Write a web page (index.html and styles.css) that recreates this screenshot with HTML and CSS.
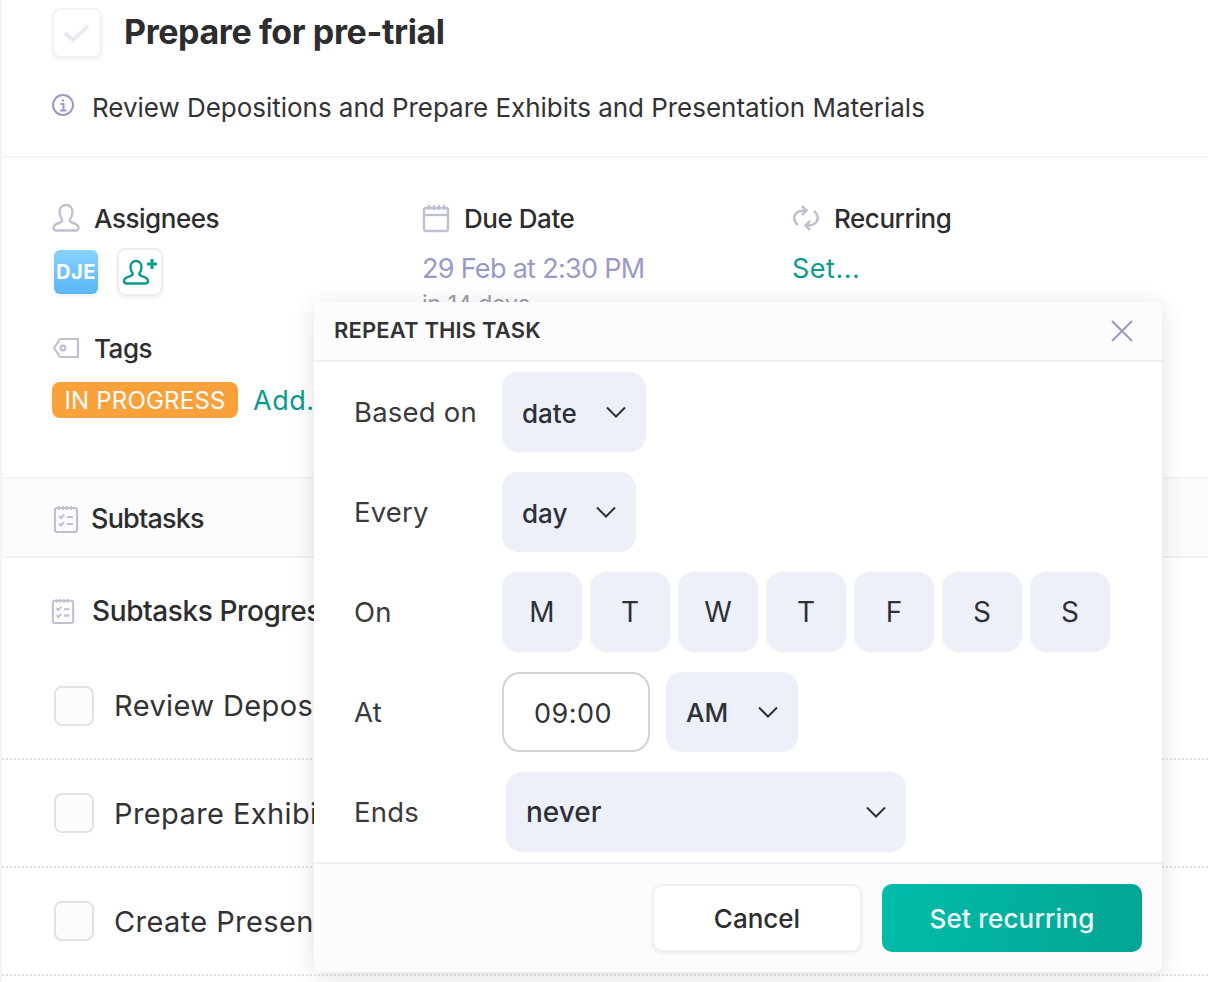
FILE: index.html
```html
<!DOCTYPE html>
<html lang="en">
<head>
<meta charset="utf-8">
<title>Prepare for pre-trial</title>
<link rel="stylesheet" href="styles.css">
</head>
<body>
<main class="page">
  <section class="head">
    <div class="title-row">
      <span class="big-check"><svg width="28" height="22" viewBox="0 0 28 22" fill="none"><path d="M2 11l8 7L25 4" stroke="#e9eaf1" stroke-width="4"/></svg></span>
      <h1>Prepare for pre-trial</h1>
    </div>
    <div class="desc-row">
      <svg class="info" width="24" height="24" viewBox="0 0 24 24" fill="none" stroke="#9a9ac6" stroke-width="2"><circle cx="12" cy="12" r="10"/><path d="M9.5 11h3v6M9 17.5h6.500"/><circle cx="12" cy="7.500" r="1.200" fill="#9a9ac6" stroke="none"/></svg>
      <p>Review Depositions and Prepare Exhibits and Presentation Materials</p>
    </div>
  </section>

  <section class="fields">
    <div class="field">
      <div class="field-head">
        <svg width="28" height="30" viewBox="0 0 28 30" fill="none" stroke="#bfc1d2" stroke-width="2.400"><path d="M14 2c-4 0-6.500 3-6.500 7 0 3 1 5.500 2.500 7.500 1 1.500-.5 2.500-3 3.500C3.500 21 1.500 22.500 1.500 25c0 1.500 1 2.500 3 2.500h19c2 0 3-1 3-2.500 0-2.500-2-4-5.500-5-2.500-1-4-2-3-3.500 1.500-2 2.500-4.500 2.500-7.500 0-4-2.500-7-6.500-7z"/></svg>
        <span>Assignees</span>
      </div>
      <div class="assignees">
        <span class="avatar">DJE</span>
        <span class="add-user"><svg width="38" height="32" viewBox="0 0 38 32" fill="none" stroke="#0a9b8c" stroke-width="2.400"><path d="M15 5c-3.500 0-5.500 2.500-5.500 6 0 2.500.8 4.500 2 6 1 1.500-.5 2.500-3 3.300-3.500 1-5.500 2.200-5.500 4.700 0 1.500 1 2.500 3 2.500h18c2 0 3-1 3-2.500 0-2.500-2-3.700-5.500-4.700-2.500-.8-4-1.800-3-3.300 1.200-1.500 2-3.500 2-6 0-3.500-2-6-5.500-6z"/><path d="M31 3v10M26 8h10" stroke-width="3"/></svg></span>
      </div>
    </div>
    <div class="field">
      <div class="field-head">
        <svg width="28" height="30" viewBox="0 0 28 30" fill="none" stroke="#bfc1d2" stroke-width="2.400"><rect x="2" y="5" width="24" height="23" rx="2"/><path d="M2 12h24"/><path d="M7 2v5M12 2v5M17 2v5M22 2v5" stroke-width="2"/></svg>
        <span>Due Date</span>
      </div>
      <div class="due">29 Feb at 2:30 PM</div>
      <div class="due-sub">in 14 days</div>
    </div>
    <div class="field">
      <div class="field-head">
        <svg width="28" height="30" viewBox="0 0 28 30" fill="none" stroke="#bfc1d2" stroke-width="2.600"><path d="M6 22C2 19 1 14 4 10.500 6 8 9 7.500 13 7.500"/><path d="M10 3l4.500 4.500L10 12"/><path d="M22 8c4 3 5 8 2 11.500-2 2.500-5 3-9 3"/><path d="M18 18l-4.500 4.500L18 27"/></svg>
        <span>Recurring</span>
      </div>
      <a class="link set">Set...</a>
    </div>
    <div class="field tags">
      <div class="field-head">
        <svg width="28" height="22" viewBox="0 0 28 22" fill="none" stroke="#bfc1d2" stroke-width="2.200"><path d="M8 2h18v18H8L2 11z" stroke-linejoin="round"/><circle cx="11" cy="11" r="2.400"/></svg>
        <span>Tags</span>
      </div>
      <div class="tag-row"><span class="tag">IN PROGRESS</span><a class="link">Add...</a></div>
    </div>
  </section>

  <section class="sub-bar">
    <svg width="26" height="28" viewBox="0 0 26 28" fill="none" stroke="#bfc1d2" stroke-width="2.200"><rect x="2" y="3" width="22" height="24" rx="2"/><path d="M6 1v4M10 1v4M14 1v4M18 1v4" stroke-width="1.600"/><path d="M6 11l2 2 3-3.500M6 18.500l2 2 3-3.500M14 12h6M14 19h6"/></svg>
    <span>Subtasks</span>
  </section>

  <section class="progress">
    <div class="progress-head">
      <svg width="24" height="26" viewBox="0 0 26 28" fill="none" stroke="#bfc1d2" stroke-width="2.200"><rect x="2" y="3" width="22" height="24" rx="2"/><path d="M6 1v4M10 1v4M14 1v4M18 1v4" stroke-width="1.600"/><path d="M6 11l2 2 3-3.500M6 18.500l2 2 3-3.500M14 12h6M14 19h6"/></svg>
      <span>Subtasks Progress</span>
    </div>
    <div class="task first"><span class="box"></span><span>Review Depositions</span></div>
    <div class="task"><span class="box"></span><span>Prepare Exhibits</span></div>
    <div class="task"><span class="box"></span><span>Create Presentation Materials</span></div>
  </section>
</main>

<aside class="modal">
  <header class="modal-head">
    <h2>REPEAT THIS TASK</h2>
    <svg width="24" height="24" viewBox="0 0 24 24" fill="none" stroke="#9a9ac6" stroke-width="2"><path d="M2 2l20 20M22 2L2 22"/></svg>
  </header>
  <div class="modal-body">
    <div class="row">
      <label>Based on</label>
      <div class="select w-date"><span>date</span><svg class="chev" width="20" height="12" viewBox="0 0 20 12" fill="none" stroke="#2d3038" stroke-width="2"><path d="M1 1.500l9 9 9-9"/></svg></div>
    </div>
    <div class="row">
      <label>Every</label>
      <div class="select w-day"><span>day</span><svg class="chev" width="20" height="12" viewBox="0 0 20 12" fill="none" stroke="#2d3038" stroke-width="2"><path d="M1 1.500l9 9 9-9"/></svg></div>
    </div>
    <div class="row">
      <label>On</label>
      <div class="days"><span>M</span><span>T</span><span>W</span><span>T</span><span>F</span><span>S</span><span>S</span></div>
    </div>
    <div class="row">
      <label>At</label>
      <div class="time">09:00</div>
      <div class="select w-am"><span>AM</span><svg class="chev" width="20" height="12" viewBox="0 0 20 12" fill="none" stroke="#2d3038" stroke-width="2"><path d="M1 1.500l9 9 9-9"/></svg></div>
    </div>
    <div class="row">
      <label>Ends</label>
      <div class="select w-ends"><span>never</span><svg class="chev" width="20" height="12" viewBox="0 0 20 12" fill="none" stroke="#2d3038" stroke-width="2"><path d="M1 1.500l9 9 9-9"/></svg></div>
    </div>
  </div>
  <footer class="modal-foot">
    <button class="btn cancel">Cancel</button>
    <button class="btn primary">Set recurring</button>
  </footer>
</aside>
</body>
</html>
```
FILE: styles.css
```css
* { box-sizing: border-box; }
html, body { margin: 0; height: 100%; overflow: hidden; background: #fff; }
body { font-family: Inter, "Liberation Sans", sans-serif; color: #2d2d2f; position: relative; }
h1, h2, p { margin: 0; }

.page { border-left: 2px solid #f4f4f4; height: 982px; }

.head { height: 158px; padding: 8px 0 0 50px; border-bottom: 2px solid #f5f5f6; }
.title-row { display: flex; align-items: center; gap: 22px; height: 50px; }
.big-check { width: 50px; height: 50px; border: 2px solid #f2f2f4; border-radius: 8px; display: flex; align-items: center; justify-content: center; box-shadow: 0 2px 4px rgba(0,0,0,.05); }
h1 { font-size: 34px; font-weight: 700; letter-spacing: -0.4px; line-height: 48px; margin-top: -2px; }
.desc-row { display: flex; align-items: center; gap: 17px; margin-top: 26px; height: 48px; }
.desc-row p { font-size: 26px; line-height: 48px; letter-spacing: -0.03px; color: #333336; white-space: nowrap; }
.info { margin: -6px 0 0 -1px; flex: none; }

.fields { height: 319px; padding: 45px 0 0 50px; display: grid; grid-template-columns: 370px 370px 1fr; grid-template-rows: 130px auto; }
.field-head { display: flex; align-items: center; gap: 14px; height: 30px; font-size: 26px; font-weight: 450; letter-spacing: -0.45px; }
.assignees { display: flex; gap: 19px; margin-top: 15px; padding-left: 2px; align-items: center; }
.avatar { width: 44px; height: 44px; border-radius: 6px; background: linear-gradient(#86d2fb, #5ab7f8); color: #fff; font-size: 20px; font-weight: 700; display: flex; align-items: center; justify-content: center; box-shadow: 0 2px 4px rgba(0,0,0,.08); letter-spacing: .5px; }
.add-user { width: 46px; height: 48px; border: 2px solid #eee; border-radius: 8px; display: flex; align-items: center; justify-content: center; box-shadow: 0 2px 4px rgba(0,0,0,.06); }
.due { font-size: 27px; line-height: 36px; margin-top: 18px; color: #9a9ac6; letter-spacing: -0.7px; }
.due-sub { font-size: 23px; line-height: 30px; margin-top: 2px; color: #9a9aa8; }
.link { color: #0a9b8c; font-size: 27px; letter-spacing: .5px; }
.set { display: block; line-height: 36px; margin-top: 18px; }
.tags { grid-column: 1 / -1; }
.tag-row { display: flex; align-items: center; gap: 15px; margin-top: 19px; }
.tag { height: 36px; width: 186px; background: #f9a23b; color: #fff; border-radius: 8px; font-size: 24px; letter-spacing: .2px; display: flex; align-items: center; justify-content: center; white-space: nowrap; }

.sub-bar { height: 81px; background: #fcfcfd; border-top: 2px solid #f5f5f6; border-bottom: 2px solid #f1f1f2; padding: 2px 0 0 50px; display: flex; align-items: center; gap: 12px; font-size: 27px; font-weight: 450; letter-spacing: -0.8px; }
.sub-bar svg { margin-left: 1px; }
.progress-head { display: flex; align-items: center; gap: 17px; height: 95px; padding: 10px 0 0 49px; font-size: 28px; font-weight: 500; letter-spacing: -0.4px; white-space: nowrap; }
.task { height: 108px; border-bottom: 2px dotted #e2e2e2; padding-left: 52px; display: flex; align-items: center; gap: 20px; font-size: 29px; letter-spacing: .4px; color: #333336; white-space: nowrap; }
.task.first { height: 107px; }
.box { width: 40px; height: 40px; flex: none; border: 2px solid #e2e2e4; border-radius: 8px; background: #fcfcfc; }

.modal { position: absolute; left: 314px; top: 302px; width: 848px; height: 670px; background: #fff; border-radius: 8px; box-shadow: 0 4px 24px rgba(0,0,0,.12); display: flex; flex-direction: column; }
.modal-head { height: 60px; background: #fcfcfc; border-bottom: 2px solid #efeff0; display: flex; align-items: center; justify-content: space-between; padding: 0 28px 0 20px; border-radius: 8px 8px 0 0; flex: none; }
h2 { font-size: 22px; font-weight: 600; letter-spacing: 0.15px; color: #333336; margin-top: -2px; }
.modal-body { flex: 1; padding: 10px 0 0 40px; display: flex; flex-direction: column; gap: 20px; }
.row { display: flex; align-items: center; height: 80px; font-size: 28px; }
.row label { width: 148px; flex: none; font-size: 27.5px; letter-spacing: .2px; color: #3a3a3e; }
.select { height: 80px; background: #edf0f8; border-radius: 16px; padding: 0 20px; display: flex; align-items: center; justify-content: space-between; font-size: 26px; font-weight: 500; color: #2d3038; }
.select span { padding-top: 2px; }
.w-date { width: 144px; }
.w-day { width: 134px; }
.w-am { width: 132px; margin-left: 16px; }
.w-am span, .w-ends span { padding-top: 0; }
.w-ends { width: 400px; margin-left: 4px; font-size: 28px; }
.days { display: flex; gap: 8px; }
.days span { width: 80px; height: 80px; border-radius: 16px; background: #edf0f8; display: flex; align-items: center; justify-content: center; color: #2d3038; }
.time { width: 148px; height: 80px; padding: 2px 6px 0 0; border: 2px solid #d4d4d4; border-radius: 18px; display: flex; align-items: center; justify-content: center; font-size: 27px; letter-spacing: .5px; color: #333336; }
.modal-foot { flex: none; height: 110px; border-top: 2px solid #efeff0; background: #fcfcfc; border-radius: 0 0 8px 8px; display: flex; justify-content: flex-end; align-items: flex-start; gap: 20px; padding: 20px 20px 0 0; }
.btn { font: inherit; font-size: 26px; font-weight: 500; border-radius: 10px; height: 68px; padding-top: 2px; cursor: pointer; }
.cancel { width: 210px; background: #fff; border: 2px solid #f0f0f0; color: #2d2d2f; box-shadow: 0 2px 4px rgba(0,0,0,.05); }
.primary { width: 260px; border: 0; color: #f2fffc; background: linear-gradient(100deg, #00bcaa, #04a594); letter-spacing: .2px; }
```
